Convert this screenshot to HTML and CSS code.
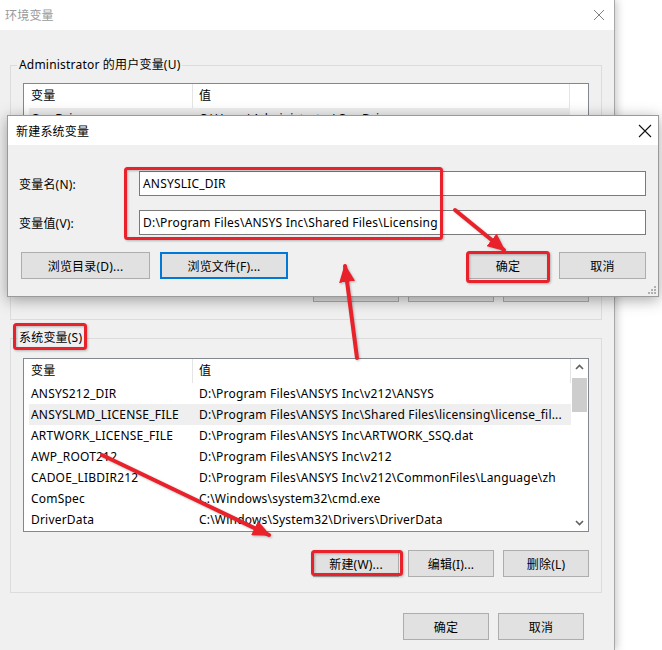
FILE: index.html
```html
<!DOCTYPE html>
<html lang="zh-CN">
<head>
    <meta charset="UTF-8">
    <meta name="viewport" content="width=device-width, initial-scale=1.0">
    <title>环境变量</title>
    <link rel="stylesheet" href="styles.css">
</head>
<body>
    <div class="Window">
        <div class="TitleBar">
            <span class="Title">环境变量</span>
            <svg class="Close" width="12" height="12" viewBox="0 0 12 12"><path d="M1 1L11 11M11 1L1 11" stroke="#808080" stroke-width="1" fill="none"/></svg>
        </div>
        <div class="Content">
            <fieldset class="Group UserGroup">
                <legend>Administrator 的用户变量(U)</legend>
                <div class="List UserList">
                    <div class="ListBody">
                        <div class="ListHead"><span>变量</span><span>值</span></div>
                        <div class="Row Selected"><span>OneDrive</span><span>C:\Users\Administrator\OneDrive</span></div>
                    </div>
                    <div class="ScrollBar Empty"></div>
                </div>
                <div class="Buttons">
                    <button class="Btn">新建(N)...</button>
                    <button class="Btn">编辑(E)...</button>
                    <button class="Btn">删除(D)</button>
                </div>
            </fieldset>
            <fieldset class="Group SysGroup">
                <legend>系统变量(S)</legend>
                <div class="List SysList">
                    <div class="ListBody">
                        <div class="ListHead"><span>变量</span><span>值</span></div>
                        <div class="Row"><span>ANSYS212_DIR</span><span>D:\Program Files\ANSYS Inc\v212\ANSYS</span></div>
                        <div class="Row Selected"><span>ANSYSLMD_LICENSE_FILE</span><span>D:\Program Files\ANSYS Inc\Shared Files\licensing\license_fil...</span></div>
                        <div class="Row"><span>ARTWORK_LICENSE_FILE</span><span>D:\Program Files\ANSYS Inc\ARTWORK_SSQ.dat</span></div>
                        <div class="Row"><span>AWP_ROOT212</span><span>D:\Program Files\ANSYS Inc\v212</span></div>
                        <div class="Row"><span>CADOE_LIBDIR212</span><span>D:\Program Files\ANSYS Inc\v212\CommonFiles\Language\zh</span></div>
                        <div class="Row"><span>ComSpec</span><span>C:\Windows\system32\cmd.exe</span></div>
                        <div class="Row"><span>DriverData</span><span>C:\Windows\System32\Drivers\DriverData</span></div>
                    </div>
                    <div class="ScrollBar">
                        <svg class="Arrow" width="17" height="17" viewBox="0 0 17 17"><path d="M5 10L8.5 6.5L12 10" stroke="#606060" stroke-width="1.6" fill="none"/></svg>
                        <span class="Thumb"></span>
                        <span class="Track"></span>
                        <svg class="Arrow" width="17" height="17" viewBox="0 0 17 17"><path d="M5 7L8.5 10.5L12 7" stroke="#606060" stroke-width="1.6" fill="none"/></svg>
                    </div>
                </div>
                <div class="Buttons">
                    <button class="Btn">新建(W)...</button>
                    <button class="Btn">编辑(I)...</button>
                    <button class="Btn">删除(L)</button>
                </div>
            </fieldset>
            <div class="Buttons Footer">
                <button class="Btn">确定</button>
                <button class="Btn">取消</button>
            </div>
        </div>
    </div>

    <div class="Dialog">
        <div class="DialogTitle">
            <span>新建系统变量</span>
            <svg class="Close" width="14" height="14" viewBox="0 0 14 14"><path d="M1 1L13 13M13 1L1 13" stroke="#111" stroke-width="1.1" fill="none"/></svg>
        </div>
        <div class="Fields">
            <label>变量名(N):</label>
            <div class="Field">ANSYSLIC_DIR</div>
            <label>变量值(V):</label>
            <div class="Field">D:\Program Files\ANSYS Inc\Shared Files\Licensing</div>
        </div>
        <div class="DialogButtons">
            <button class="Btn Wide">浏览目录(D)...</button>
            <button class="Btn Wide Focused">浏览文件(F)...</button>
            <span class="Spacer"></span>
            <button class="Btn Ok">确定</button>
            <button class="Btn Cancel">取消</button>
        </div>
        <svg class="Grip" width="8" height="8" viewBox="0 0 8 8">
            <rect x="6" y="0" width="2" height="2" fill="#b0b0b0"/>
            <rect x="3" y="3" width="2" height="2" fill="#b0b0b0"/>
            <rect x="6" y="3" width="2" height="2" fill="#b0b0b0"/>
            <rect x="0" y="6" width="2" height="2" fill="#b0b0b0"/>
            <rect x="3" y="6" width="2" height="2" fill="#b0b0b0"/>
            <rect x="6" y="6" width="2" height="2" fill="#b0b0b0"/>
        </svg>
    </div>

    <!-- red boxes and arrows drawn on top -->
    <svg class="Marks" width="662" height="650" viewBox="0 0 662 650">
        <defs>
            <marker id="head" markerUnits="userSpaceOnUse" markerWidth="18" markerHeight="16" refX="16" refY="8" orient="auto">
                <path d="M0 0L18 8L0 16Z" fill="#e8212a"/>
            </marker>
        </defs>
        <g fill="none" stroke="#e8212a" stroke-width="3">
            <rect x="125.5" y="168.5" width="316" height="70" rx="2"/>
            <rect x="467.5" y="252.5" width="81" height="29" rx="2"/>
            <rect x="14.5" y="324.5" width="71" height="24" rx="2"/>
            <rect x="312.5" y="551.5" width="89" height="23" rx="2"/>
        </g>
        <g stroke="#e8212a" stroke-width="4" stroke-linecap="round">
            <line x1="455" y1="210" x2="504" y2="250" marker-end="url(#head)"/>
            <line x1="357" y1="358" x2="345" y2="266" marker-end="url(#head)"/>
            <line x1="102" y1="455" x2="269" y2="535" marker-end="url(#head)"/>
        </g>
    </svg>
</body>
</html>
```

FILE: styles.css
```css
* {
    box-sizing: border-box;
}
body {
    margin: 0;
    width: 662px;
    height: 650px;
    overflow: hidden;
    position: relative;
    background: #ffffff;
    color: #000;
    font-family: "Noto Sans", "Noto Sans CJK SC", sans-serif;
    font-size: 12px;
    letter-spacing: 0.2px;
}
.Window {
    width: 615px;
    height: 650px;
    background: #f0f0f0;
    border-right: 1px solid #a8a8a8;
    box-shadow: 2px 0 8px rgba(0, 0, 0, 0.22);
    display: flex;
    flex-direction: column;
}
.TitleBar {
    height: 30px;
    background: #fff;
    display: flex;
    align-items: center;
    justify-content: space-between;
    padding: 0 9px 0 5px;
}
.Title {
    color: #999;
}
.Content {
    padding: 27px 12px 0 10px;
}
.Group {
    margin: 0;
    min-width: 0;
    border: 1px solid #dcdcdc;
    padding: 10px 12px 17px 12px;
}
.Group legend {
    padding: 0 2px;
    margin-left: -6px;
    line-height: 16px;
}
.SysGroup {
    margin-top: 10px;
    padding-top: 12px;
    padding-bottom: 15px;
}
.List {
    display: flex;
    border: 1px solid #828790;
    background: #fff;
    overflow: hidden;
}
.UserList {
    height: 185px;
}
.SysList {
    height: 174px;
}
.ListBody {
    flex: 1;
}
.ListHead,
.Row {
    display: grid;
    grid-template-columns: 164px 1fr;
    margin-left: 5px;
    white-space: nowrap;
    overflow: hidden;
}
.ListHead {
    height: 24px;
    line-height: 24px;
    margin-left: 0;
    padding-left: 5px;
    border-right: 1px solid #e5e5e5;
}
.ListHead span:first-child {
    padding-left: 2px;
    border-right: 1px solid #e5e5e5;
}
.ListHead span:last-child {
    padding-left: 6px;
}
.Row {
    height: 21px;
    line-height: 21px;
}
.Row span:first-child {
    padding-left: 2px;
}
.Row span:last-child {
    padding-left: 6px;
    overflow: hidden;
}
.Row.Selected {
    background: #efefef;
}
.ScrollBar {
    width: 17px;
    display: flex;
    flex-direction: column;
    background: #fff;
}
.ScrollBar.Empty {
    width: 18px;
}
.Arrow {
    display: block;
    flex: none;
}
.Thumb {
    height: 34px;
    margin: 2px 1px 0 1px;
    background: #cdcdcd;
    flex: none;
}
.Track {
    flex: 1;
}
.Buttons {
    display: flex;
    justify-content: flex-end;
    gap: 9px;
    margin-top: 7px;
}
.SysGroup .Buttons {
    margin-top: 18px;
}
.Footer {
    margin-top: 20px;
    margin-right: 18px;
}
.Btn {
    width: 86px;
    height: 27px;
    padding: 0;
    background: #e1e1e1;
    border: 1px solid #adadad;
    border-radius: 0;
    font-family: inherit;
    font-size: 12px;
    letter-spacing: 0.2px;
    color: #000;
}
.Dialog {
    position: absolute;
    left: 7px;
    top: 115px;
    width: 652px;
    height: 182px;
    background: #f0f0f0;
    border: 1px solid #9a9a9a;
    box-shadow: 0 3px 14px rgba(0, 0, 0, 0.35);
    display: flex;
    flex-direction: column;
}
.DialogTitle {
    height: 29px;
    flex: none;
    background: #fff;
    display: flex;
    align-items: center;
    justify-content: space-between;
    padding: 0 6px 0 8px;
}
.Fields {
    display: grid;
    grid-template-columns: 120px 1fr;
    row-gap: 14px;
    align-items: center;
    padding: 26px 12px 0 11px;
}
.Field {
    height: 25px;
    line-height: 23px;
    padding-left: 3px;
    border: 1px solid #7a7a7a;
    background: #fff;
}
.DialogButtons {
    display: flex;
    gap: 10px;
    margin-top: 17px;
    padding: 0 12px 0 13px;
}
.Btn.Wide {
    width: 129px;
}
.Btn.Focused {
    width: 128px;
    border: 1px solid #0078d7;
    box-shadow: inset 0 0 0 1px #0078d7;
}
.Spacer {
    flex: 1;
}
.Btn.Ok {
    width: 80px;
}
.Btn.Cancel {
    width: 87px;
    margin-left: 1px;
}
.Grip {
    position: absolute;
    right: 2px;
    bottom: 2px;
}
.Marks {
    position: absolute;
    left: 0;
    top: 0;
    pointer-events: none;
    filter: drop-shadow(1px 1px 1px rgba(0, 0, 0, 0.25));
}
```
